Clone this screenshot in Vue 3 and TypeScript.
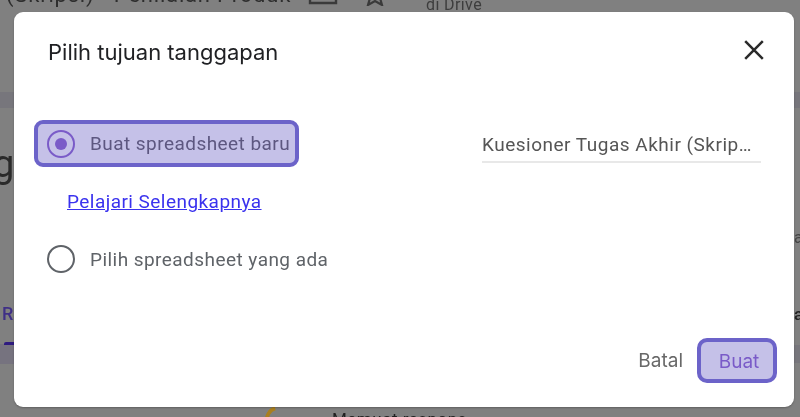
<script setup lang="ts">
const title = 'Pilih tujuan tanggapan'
const fieldValue = 'Kuesioner Tugas Akhir (Skripsi) - Penilaian Produk'
</script>

<template>
  <div class="screen">
    <div class="underlay" aria-hidden="true">
      <span class="bg-text doc-title">(Skripsi) - Penilaian Produk</span>
      <svg class="bg-folder" width="30" height="12" viewBox="0 0 30 12"><path d="M2 0v9h26V0" fill="none" stroke="#3a3a3a" stroke-width="2.4" /></svg>
      <svg class="bg-star" width="24" height="12" viewBox="0 0 24 12"><path d="M4 0l3 4-2 7 7-4 7 4-2-7 3-4" fill="none" stroke="#3a3a3a" stroke-width="2.2" /></svg>
      <span class="bg-text drive">di Drive</span>
      <span class="bg-band band-l1"></span>
      <span class="bg-band band-r1"></span>
      <span class="bg-band band-l2"></span>
      <span class="bg-band band-r2"></span>
      <span class="bg-text big-g">g</span>
      <span class="bg-text tab-r">R</span>
      <span class="tab-line"></span>
      <span class="bg-text side-a">a</span>
      <span class="bg-text side-b">a</span>
      <span class="arc"></span>
      <span class="bg-text loading">Memuat respons</span>
    </div>

    <section class="dialog">
      <header class="head">
        <h2 class="title">{{ title }}</h2>
        <svg class="close" width="24" height="24" viewBox="0 0 24 24">
          <path d="M3.2 3.2l17.6 17.6M20.8 3.2L3.2 20.8" fill="none" stroke="#2a2a2a" stroke-width="2.5" />
        </svg>
      </header>

      <div class="body">
        <div class="first-row">
          <div class="option focused">
            <svg class="radio" width="28" height="28" viewBox="0 0 28 28">
              <circle cx="14" cy="14" r="13" fill="none" stroke="#7a5bc8" stroke-width="2" />
              <circle cx="14" cy="14" r="6" fill="#7a5bc8" />
            </svg>
            <span class="label selected">Buat spreadsheet baru</span>
          </div>
          <div class="field"><span class="field-text">{{ fieldValue }}</span></div>
        </div>
        <a class="link" href="#">Pelajari Selengkapnya</a>
        <div class="option plain">
          <svg class="radio" width="28" height="28" viewBox="0 0 28 28">
            <circle cx="14" cy="14" r="13" fill="none" stroke="#5f6368" stroke-width="2" />
          </svg>
          <span class="label">Pilih spreadsheet yang ada</span>
        </div>
      </div>

      <footer class="foot">
        <button class="btn cancel" type="button">Batal</button>
        <button class="btn create" type="button">Buat</button>
      </footer>
    </section>
  </div>
</template>

<style>
html, body { margin: 0; background: #808080; }
</style>

<style scoped>
.screen {
  position: relative;
  width: 800px;
  height: 417px;
  box-sizing: border-box;
  padding: 12px 6px 10px 14px;
  overflow: hidden;
  background: #808080;
  font-family: Roboto, sans-serif;
  filter: blur(0.45px);
}
.underlay { position: absolute; inset: 0; }
.bg-text { position: absolute; white-space: nowrap; color: #333; line-height: 1; }
.doc-title { left: 6px; top: -16px; font-size: 22px; letter-spacing: 0.8px; color: #2e2e2e; }
.bg-folder { position: absolute; left: 308px; top: -6px; }
.bg-star { position: absolute; left: 363px; top: -6px; }
.drive { left: 426px; top: -3px; font-size: 16px; color: #3d3d3d; letter-spacing: 0.4px; }
.bg-band { position: absolute; background: #77767c; }
.band-l1 { left: 0; top: 92px; width: 14px; height: 16px; }
.band-r1 { right: 0; top: 92px; width: 6px; height: 16px; }
.band-l2 { left: 0; top: 344px; width: 14px; height: 20px; background: #76737f; }
.band-r2 { right: 0; top: 345px; width: 6px; height: 18px; }
.big-g { left: -7px; top: 145px; font-size: 38px; color: #2a2a2a; }
.tab-r { left: 2px; top: 305px; font-size: 18px; font-weight: 500; color: #3f2f86; }
.tab-line { position: absolute; left: 4px; top: 342px; width: 10px; height: 3px; background: #2e1a80; border-radius: 2px 0 0 0; }
.side-a { left: 794px; top: 230px; font-size: 16px; color: #444; }
.side-b { left: 794px; top: 306px; font-size: 17px; color: #222; font-weight: 500; }
.arc {
  position: absolute;
  left: 265px;
  top: 406px;
  width: 26px;
  height: 26px;
  box-sizing: border-box;
  border: 4px solid transparent;
  border-left-color: #a97f1f;
  border-radius: 50%;
  transform: rotate(30deg);
}
.loading { left: 332px; top: 411px; font-size: 17px; color: #1f1f1f; letter-spacing: 0.5px; }

.dialog {
  position: relative;
  width: 780px;
  height: 395px;
  display: flex;
  flex-direction: column;
  box-sizing: border-box;
  background: #fff;
  border-radius: 9px;
  box-shadow: 0 1px 2px rgba(0, 0, 0, 0.25);
}
.head {
  display: flex;
  justify-content: space-between;
  align-items: center;
  height: 80px;
  padding: 0 28px 0 34px;
}
.title {
  margin: 0;
  font-family: Inter, sans-serif;
  font-size: 22px;
  font-weight: 400;
  color: #202124;
}
.close { display: block; margin-top: -4px; }
.body { display: flex; flex-direction: column; padding: 28px 0 0 20px; }
.first-row { display: flex; justify-content: space-between; align-items: center; }
.option { display: flex; align-items: center; gap: 15px; }
.focused {
  box-sizing: border-box;
  width: 265px;
  height: 47px;
  padding: 0 9px;
  border: 4px solid #6c63c9;
  border-radius: 9px;
  background: #c5c1e8;
}
.plain { margin: 31px 0 0 13px; }
.radio { display: block; flex: none; }
.label { font-size: 19px; letter-spacing: 0.45px; color: #5f6368; white-space: nowrap; }
.selected { color: #5d5780; }
.field {
  box-sizing: border-box;
  width: 279px;
  height: 30px;
  margin: 9px 33px 0 0;
  border-bottom: 2px solid #e8e8e8;
}
.field-text {
  display: block;
  width: 270px;
  overflow: hidden;
  white-space: nowrap;
  text-overflow: ellipsis;
  font-size: 19px;
  letter-spacing: 0.5px;
  color: #555;
}
.link {
  align-self: flex-start;
  margin: 23px 0 0 33px;
  font-size: 19px;
  line-height: 24px;
  letter-spacing: 0.45px;
  color: #3a32ee;
}
.foot {
  display: flex;
  justify-content: flex-end;
  align-items: center;
  gap: 14px;
  margin-top: auto;
  padding: 0 17px 24px 0;
}
.btn {
  font-family: Inter, sans-serif;
  font-size: 19px;
  background: none;
  border: 0;
  padding: 0;
}
.cancel { color: #686868; }
.create {
  box-sizing: border-box;
  width: 80px;
  height: 45px;
  padding: 1px 0 0 4px;
  border: 4px solid #6c63c9;
  border-radius: 10px;
  background: #c5c1e8;
  color: #7a5bc8;
}
</style>
